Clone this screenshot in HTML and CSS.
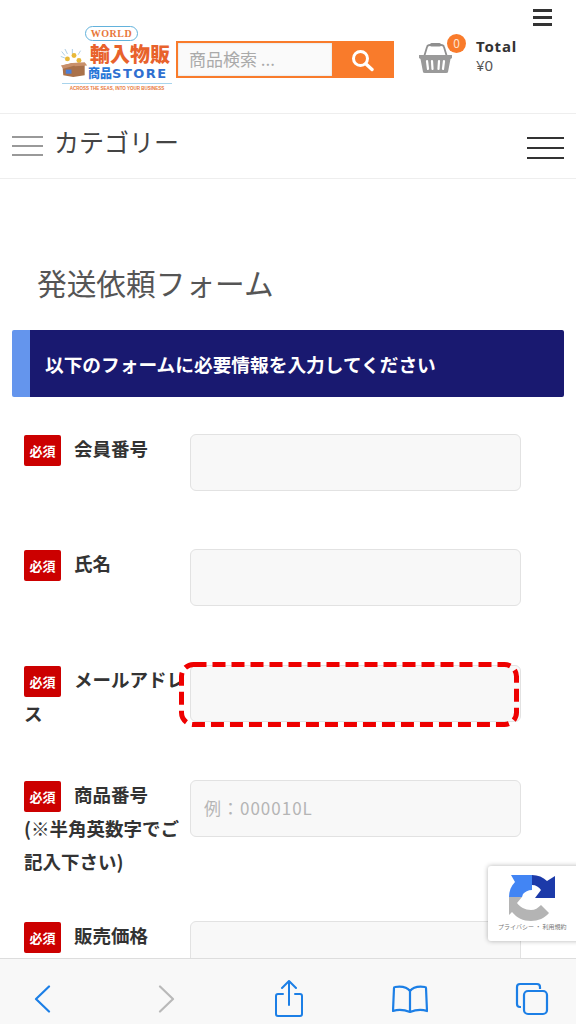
FILE: index.html
```html
<!DOCTYPE html>
<html lang="ja">
<head>
    <meta charset="UTF-8">
    <meta name="viewport" content="width=device-width, initial-scale=1.0">
    <title>発送依頼フォーム</title>
    <link rel="stylesheet" href="styles.css">
</head>
<body>
    <div class="page">
        <div class="header">
            <div class="logo">
                <span class="logo-world">WORLD</span>
                <div class="logo-main">
                    <svg class="logo-box" width="28" height="34" viewBox="0 0 34 36">
                        <g fill="none" stroke="#9fc4e0" stroke-width="1">
                            <path d="M2 4l4 5M6 1l3 6M15 1v6M25 3l-3 5M1 10l5 2"/>
                        </g>
                        <circle cx="9" cy="13" r="3" fill="#e8b93a"/>
                        <circle cx="17" cy="9" r="3" fill="#e8b93a"/>
                        <circle cx="23" cy="15" r="3" fill="#e8b93a"/>
                        <path d="M3 21l12-3 15 2v13l-14 2-12-2z" fill="#a9714a"/>
                        <path d="M1 21l14-3 3 3-14 4zM30 17l3 4-15 1 -3-4z" fill="#c9906a"/>
                        <rect x="7" y="26" width="7" height="5" fill="#4a7fd8"/>
                    </svg>
                    <div class="logo-words">
                        <span class="logo-orange">輸入物販</span>
                        <span class="logo-blue">商品<span class="logo-store">STORE</span></span>
                    </div>
                </div>
                <span class="logo-tag">ACROSS THE SEAS, INTO YOUR BUSINESS</span>
            </div>
            <div class="search">
                <div class="search-input">商品検索 ...</div>
                <div class="search-btn">
                    <svg width="24" height="24" viewBox="0 0 24 24" fill="none" stroke="#fff" stroke-linecap="round">
                        <circle cx="10.5" cy="10.5" r="7" stroke-width="3"/>
                        <path d="M16 16l6 5.5" stroke-width="3.4"/>
                    </svg>
                </div>
            </div>
            <div class="cart">
                <svg class="basket" width="33" height="30" viewBox="0 0 33 30">
                    <path d="M5 14l3-10q.5-2 3-2h11q2.500 0 3 2l3 10" fill="none" stroke="#8f8f8f" stroke-width="1.800"/>
                    <rect x="11" y="0" width="11" height="3.500" rx="1.500" fill="#8f8f8f"/>
                    <path d="M0 12h33v3l-1.500 1-2.500 13q0 1-2 1H6q-2 0-2-1L1.500 16 0 15z" fill="#9a9a9a"/>
                    <path d="M8 18l1 8M13 18l.5 8M20 18l-.5 8M25 18l-1 8" stroke="#fff" stroke-width="2.200" stroke-linecap="round"/>
                </svg>
                <span class="cart-count">0</span>
                <div class="cart-text">
                    <div class="cart-total">Total</div>
                    <div class="cart-price">¥0</div>
                </div>
            </div>
            <div class="top-menu"><span></span><span></span><span></span></div>
        </div>

        <div class="category-bar">
            <div class="category-left">
                <div class="category-icon"><span></span><span></span><span></span></div>
                <span class="category-name">カテゴリー</span>
            </div>
            <div class="category-burger"><span></span><span></span><span></span></div>
        </div>

        <h1 class="page-title">発送依頼フォーム</h1>

        <div class="notice">以下のフォームに必要情報を入力してください</div>

        <div class="form">
            <div class="field">
                <label class="field-label"><span class="required">必須</span>会員番号</label>
                <div class="field-input"><div class="input"></div></div>
            </div>
            <div class="field">
                <label class="field-label"><span class="required">必須</span>氏名</label>
                <div class="field-input"><div class="input"></div></div>
            </div>
            <div class="field">
                <label class="field-label"><span class="required">必須</span>メールアドレス</label>
                <div class="field-input">
                    <div class="input"></div>
                    <svg class="highlight" width="340" height="65" viewBox="0 0 340 65">
                        <rect x="2.500" y="2.500" width="335" height="60" rx="12" fill="none" stroke="#ee0000" stroke-width="5" stroke-dasharray="13 6"/>
                    </svg>
                </div>
            </div>
            <div class="field">
                <label class="field-label"><span class="required">必須</span>商品番号<br>(※半角英数字でご記入下さい)</label>
                <div class="field-input"><div class="input">例：000010L</div></div>
            </div>
            <div class="field">
                <label class="field-label"><span class="required">必須</span>販売価格</label>
                <div class="field-input"><div class="input"></div></div>
            </div>
        </div>

        <div class="recaptcha">
            <svg width="48" height="48" viewBox="0 0 48 48">
                <path d="M1 23C1 17 3 12 7 8L3 1h21v15c-4 0-7 2-9 4l-1 3z" fill="#4285f4"/>
                <path d="M24 1c6 0 11 2 15 6l8-5v22H27l6-8c-2-3-5-5-9-5z" fill="#1c3aa9"/>
                <path d="M1 23h13l-5 6c3 4 8 7 14 7 4 0 7-2 10-5l8 8c-4 5-11 8-18 8-8 0-14-3-19-9l-3 3z" fill="#b4b4b4"/>
            </svg>
            <div class="recaptcha-text">プライバシー ・ 利用規約</div>
        </div>

        <div class="toolbar">
            <div class="tool">
                <svg width="17" height="28" viewBox="0 0 17 28" fill="none" stroke="#1c7fe6" stroke-width="2.200" stroke-linecap="round" stroke-linejoin="round">
                    <path d="M15 1.500L2 14l13 12.500"/>
                </svg>
            </div>
            <div class="tool tool-next">
                <svg width="17" height="28" viewBox="0 0 17 28" fill="none" stroke="#b9b9b9" stroke-width="2.200" stroke-linecap="round" stroke-linejoin="round">
                    <path d="M2 1.500L15 14 2 26.500"/>
                </svg>
            </div>
            <div class="tool">
                <svg width="32" height="38" viewBox="0 0 32 38" fill="none" stroke="#1c7fe6" stroke-width="2" stroke-linecap="round" stroke-linejoin="round">
                    <path d="M10 14H5q-2 0-2 2v18q0 2 2 2h22q2 0 2-2V16q0-2-2-2h-5"/>
                    <path d="M16 25V2M9 8l7-7 7 7"/>
                </svg>
            </div>
            <div class="tool">
                <svg width="36" height="30" viewBox="0 0 36 30" fill="none" stroke="#1c7fe6" stroke-width="2.200" stroke-linecap="round" stroke-linejoin="round">
                    <path d="M18 7C15 3 10 2 3 3q-1 0-1 1L1 27c6-2 12-1 17 1 5-2 11-3 17-1L34 4q0-1-1-1C26 2 21 3 18 7zM18 7v21"/>
                </svg>
            </div>
            <div class="tool">
                <svg width="34" height="34" viewBox="0 0 34 34" fill="none" stroke="#1c7fe6" stroke-width="2.200" stroke-linejoin="round">
                    <path d="M6 25H5q-3 0-3-3V5q0-3 3-3h17q3 0 3 3v2"/>
                    <rect x="9" y="9" width="23" height="23" rx="4"/>
                </svg>
            </div>
        </div>
    </div>
</body>
</html>
```
FILE: styles.css
```css
:root {
    --orange: #f97b2b;
    --navy: #191970;
    --text: #333;
    --line: #eee;
}

* {
    box-sizing: border-box;
}

body {
    margin: 0;
    font-family: "Noto Sans CJK JP", "Noto Sans", sans-serif;
    color: var(--text);
    background: #fff;
}

.page {
    position: relative;
    width: 576px;
    height: 1024px;
    overflow: hidden;
}

/* header */
.header {
    position: relative;
    display: flex;
    height: 114px;
    padding: 26px 0 0 60px;
    border-bottom: 1px solid var(--line);
}

.logo {
    flex: none;
    width: 116px;
    display: flex;
    flex-direction: column;
    align-items: flex-start;
}

.logo-world {
    width: 53px;
    height: 15px;
    margin-left: 25px;
    border: 1px solid #62b2dc;
    border-radius: 8px;
    font-family: "Liberation Serif", serif;
    font-size: 10px;
    font-weight: bold;
    line-height: 13px;
    letter-spacing: .5px;
    text-align: center;
    color: #e8773a;
}

.logo-main {
    display: flex;
    width: 112px;
    height: 38px;
    margin-top: 2px;
}

.logo-box {
    flex: none;
    margin-top: 3px;
}

.logo-words {
    flex: 1;
    display: flex;
    flex-direction: column;
    align-items: flex-start;
    white-space: nowrap;
}

.logo-orange {
    margin-left: 2px;
    font-size: 20px;
    font-weight: 900;
    line-height: 22px;
    color: #e8622c;
}

.logo-blue {
    font-size: 12px;
    font-weight: 900;
    line-height: 15px;
    color: #2a78d8;
}

.logo-store {
    font-family: "DejaVu Sans", sans-serif;
    font-size: 13px;
    letter-spacing: 1.500px;
    color: #2f6fd0;
}

.logo-tag {
    width: 110px;
    margin-top: 2px;
    margin-left: 2px;
    padding-top: 2px;
    border-top: 1px solid #a8d4ec;
    font-family: "Liberation Sans", sans-serif;
    font-size: 4.500px;
    font-weight: bold;
    line-height: 5px;
    white-space: nowrap;
    text-align: center;
    color: #e8773a;
}

.search {
    flex: none;
    display: flex;
    width: 218px;
    height: 37px;
    margin-top: 15px;
    border: 2px solid var(--orange);
}

.search-input {
    width: 154px;
    padding-left: 11px;
    background: #fafafa;
    box-shadow: inset 0 0 2px #ccc;
    font-size: 17px;
    line-height: 32px;
    color: #aaa;
}

.search-btn {
    flex: 1;
    display: flex;
    align-items: center;
    justify-content: center;
    background: var(--orange);
}

.cart {
    position: relative;
    display: flex;
    align-items: flex-start;
    margin-left: 25px;
    margin-top: 17px;
}

.basket {
    flex: none;
}

.cart-count {
    position: absolute;
    top: -9px;
    left: 28px;
    width: 19px;
    height: 19px;
    border-radius: 50%;
    background: var(--orange);
    font-size: 12px;
    line-height: 18px;
    text-align: center;
    color: #fde3d0;
}

.cart-text {
    margin-left: 24px;
    margin-top: -6px;
    font-size: 15px;
}

.cart-total {
    font-family: "Noto Sans", sans-serif;
    font-weight: bold;
    line-height: 19px;
    letter-spacing: .8px;
}

.cart-price {
    font-family: "Noto Sans", sans-serif;
    font-size: 15px;
    line-height: 18px;
    color: #555;
}

.top-menu {
    position: absolute;
    top: 9px;
    left: 533px;
    width: 19px;
}

.top-menu span {
    display: block;
    height: 3px;
    margin-bottom: 4px;
    background: #333;
}

/* category bar */
.category-bar {
    display: flex;
    align-items: center;
    justify-content: space-between;
    height: 65px;
    padding: 0 12px;
    border-bottom: 1px solid var(--line);
}

.category-left {
    display: flex;
    align-items: center;
}

.category-icon {
    width: 31px;
    margin-right: 11px;
}

.category-icon span {
    display: block;
    height: 2px;
    margin-bottom: 7px;
    background: #999;
}

.category-icon span:last-child {
    margin-bottom: 0;
}

.category-name {
    margin-top: -10px;
    font-size: 25px;
    line-height: 30px;
    color: #444;
}

.category-burger {
    width: 37px;
    margin-top: 4px;
}

.category-burger span {
    display: block;
    height: 2px;
    margin-bottom: 8px;
    background: #333;
}

.category-burger span:last-child {
    margin-bottom: 0;
}

/* form */
.page-title {
    margin: 0;
    padding: 83px 0 0 37px;
    font-size: 29.700px;
    font-weight: normal;
    line-height: 42px;
    color: #555;
}

.notice {
    height: 67px;
    margin: 26px 12px 37px;
    padding-left: 15px;
    border-left: 18px solid #6495ed;
    border-radius: 2px;
    background: var(--navy);
    font-size: 18.700px;
    font-weight: bold;
    line-height: 67px;
    white-space: nowrap;
    color: #fff;
}

.form {
    padding-left: 24px;
}

.field {
    display: flex;
    align-items: flex-start;
}

.field-label {
    flex: none;
    width: 162px;
    margin-top: -2px;
    margin-right: 4px;
    margin-bottom: 44px;
    font-size: 18.500px;
    font-weight: bold;
    line-height: 32.700px;
    word-break: break-all;
}

.required {
    display: inline-block;
    width: 37px;
    height: 31px;
    margin-top: 3px;
    margin-right: 13px;
    border-radius: 2px;
    background: #cc0000;
    font-size: 13px;
    line-height: 31px;
    text-align: center;
    vertical-align: top;
    color: #fff;
}

.field-input {
    position: relative;
    flex: none;
    width: 331px;
    margin-bottom: 58.300px;
}

.input {
    height: 57px;
    padding-left: 13px;
    border: 1px solid #e2e2e2;
    border-radius: 6px;
    background: #f8f8f8;
    font-size: 17px;
    line-height: 54px;
    letter-spacing: 1px;
    color: #b5b5b5;
}

.highlight {
    position: absolute;
    top: -3px;
    left: -11px;
}

/* overlays */
.recaptcha {
    position: absolute;
    top: 866px;
    left: 488px;
    width: 100px;
    height: 75px;
    padding: 8px 0 0 20px;
    border-radius: 3px;
    background: #fff;
    box-shadow: 0 0 5px rgba(0,0,0,0.3);
}

.recaptcha svg {
    display: block;
}

.recaptcha-text {
    position: absolute;
    top: 56px;
    left: 10px;
    font-size: 6px;
    line-height: 9px;
    white-space: nowrap;
    color: #777;
}

.toolbar {
    position: absolute;
    top: 958px;
    left: 0;
    display: flex;
    align-items: center;
    justify-content: space-between;
    width: 576px;
    height: 66px;
    padding: 14px 24px 0 22px;
    border-top: 1px solid #ddd;
    background: #f8f8f8;
}

.tool {
    display: flex;
    justify-content: center;
    width: 40px;
}

.tool-next {
    margin-left: 3px;
}
```
